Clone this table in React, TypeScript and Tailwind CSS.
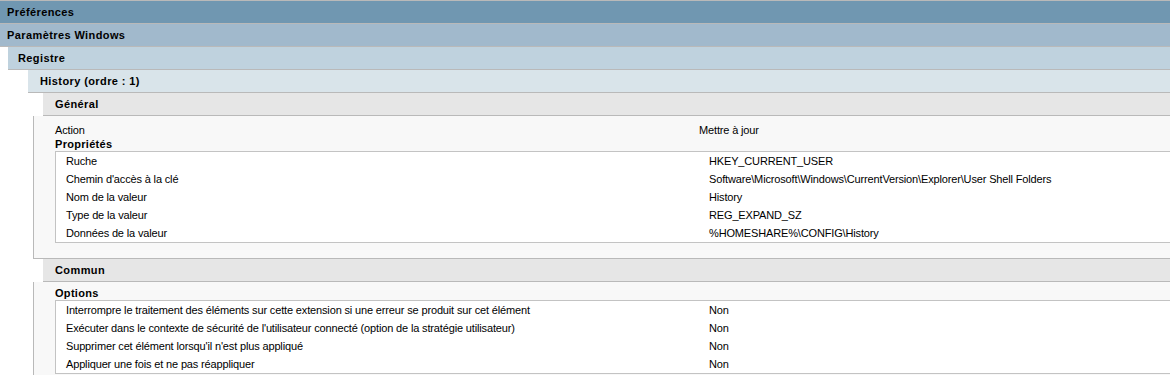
const PROPS = [
  ['Ruche', 'HKEY_CURRENT_USER'],
  ["Chemin d'accès à la clé", 'Software\\Microsoft\\Windows\\CurrentVersion\\Explorer\\User Shell Folders'],
  ['Nom de la valeur', 'History'],
  ['Type de la valeur', 'REG_EXPAND_SZ'],
  ['Données de la valeur', '%HOMESHARE%\\CONFIG\\History'],
];

const OPTIONS = [
  ['Interrompre le traitement des éléments sur cette extension si une erreur se produit sur cet élément', 'Non'],
  ["Exécuter dans le contexte de sécurité de l'utilisateur connecté (option de la stratégie utilisateur)", 'Non'],
  ["Supprimer cet élément lorsqu'il n'est plus appliqué", 'Non'],
  ['Appliquer une fois et ne pas réappliquer', 'Non'],
];

function Band({ label, className }: { label: string; className: string }) {
  return (
    <div className={`h-[23px] flex items-center border-b border-[#b9b9b9] font-bold tracking-[0.4px] ${className}`}>
      {label}
    </div>
  );
}

function Table({ rows }: { rows: string[][] }) {
  return (
    <div className="bg-white border-y border-l border-[#c3c3c3]">
      {rows.map(([k, v]) => (
        <div key={k} className="h-[18px] flex items-center">
          <div className="w-[653px] pl-[10px] shrink-0">{k}</div>
          <div>{v}</div>
        </div>
      ))}
    </div>
  );
}

export default function App() {
  return (
    <div className="w-[1170px] h-[375px] overflow-hidden bg-white border-t border-[#b9b9b9] font-['Liberation_Sans',Arial,sans-serif] text-[11px] leading-[14px] tracking-[-0.15px] text-black">
      <Band label="Préférences" className="bg-[#7097b1] pl-[7px]" />
      <Band label="Paramètres Windows" className="bg-[#a1b9cc] pl-[7px]" />
      <div className="pl-[8px]">
        <Band label="Registre" className="bg-[#bfd2de] pl-[10px]" />
        <div className="pl-[20px]">
          <Band label="History (ordre : 1)" className="bg-[#d9e4ea] pl-[12px]" />
          <div className="pl-[5px]">
            <Band label="Général" className="ml-[10px] bg-[#e6e6e6] pl-[12px]" />
            <div className="bg-[#f8f8f8] border-l border-b border-[#b9b9b9] pl-[21px] pt-[7px] pb-[15px]">
              <div className="flex">
                <div className="w-[644px] shrink-0">Action</div>
                <div>Mettre à jour</div>
              </div>
              <div className="font-bold tracking-[0.3px]">Propriétés</div>
              <Table rows={PROPS} />
            </div>
            <Band label="Commun" className="ml-[10px] bg-[#e6e6e6] pl-[12px]" />
            <div className="bg-[#f8f8f8] border-l border-b border-[#b9b9b9] pl-[21px] pt-[4px] pb-[10px]">
              <div className="font-bold tracking-[0.3px]">Options</div>
              <Table rows={OPTIONS} />
            </div>
          </div>
        </div>
      </div>
    </div>
  );
}
